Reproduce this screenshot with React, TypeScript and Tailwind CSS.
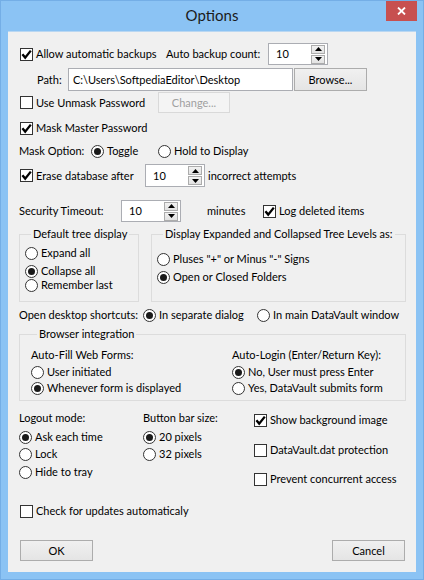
import React from "react";

function Check({ checked }: { checked?: boolean }) {
  return (
    <span className="flex h-[13px] w-[13px] shrink-0 items-center justify-center border border-[#333333] bg-white">
      {checked && (
        <svg width="11" height="11" viewBox="0 0 11 11">
          <path d="M1.4 5.2 L4.2 8.6 L9.8 1.6" fill="none" stroke="#000" strokeWidth="2.3" />
        </svg>
      )}
    </span>
  );
}

function Radio({ on }: { on?: boolean }) {
  return (
    <span className="flex h-[13px] w-[13px] shrink-0 items-center justify-center rounded-full border border-[#333333] bg-white">
      {on && <span className="h-[7px] w-[7px] rounded-full bg-[#1a1a1a]" />}
    </span>
  );
}

function SpinBtn({ up }: { up?: boolean }) {
  return (
    <span className="flex h-[9px] w-[14px] items-center justify-center border border-[#ACACAC] bg-gradient-to-b from-[#F2F2F2] to-[#E2E2E2]">
      <svg width="7" height="4" viewBox="0 0 7 4">
        {up ? <path d="M0 4 L3.5 0 L7 4 Z" fill="#000" /> : <path d="M0 0 L3.5 4 L7 0 Z" fill="#000" />}
      </svg>
    </span>
  );
}

function Spin({ value }: { value: string }) {
  return (
    <div className="flex h-full w-[60px] shrink-0 items-stretch border border-[#ABADB3] bg-white">
      <span className="flex flex-1 items-center pl-[7px]">{value}</span>
      <div className="flex flex-col justify-center gap-[1px] pr-[2px]">
        <SpinBtn up />
        <SpinBtn />
      </div>
    </div>
  );
}

function Btn({ children, className = "" }: { children: React.ReactNode; className?: string }) {
  return (
    <span
      className={`flex h-full w-[73px] shrink-0 items-center justify-center border border-[#ACACAC] bg-gradient-to-b from-[#F0F0F0] to-[#E5E5E5] ${className}`}
    >
      {children}
    </span>
  );
}

export default function App() {
  return (
    <div
      className="flex h-[580px] w-[424px] flex-col whitespace-nowrap border border-[#74AEE6] bg-[#8BC3F4] text-[11px] leading-[16px] text-black"
      style={{ fontFamily: 'Lato, "Noto Sans", sans-serif' }}
    >
      {/* title bar */}
      <div className="relative flex h-[30px] shrink-0 items-center justify-center pb-[2px]">
        <span className="text-[15px] text-[#1b1b1b]">Options</span>
        <span className="absolute right-[6px] top-0 flex h-[20px] w-[31px] items-center justify-center bg-[#C75050]">
          <svg width="9" height="8" viewBox="0 0 9 8">
            <path d="M1 0.5 L8 7.5 M8 0.5 L1 7.5" stroke="#fff" strokeWidth="1.8" />
          </svg>
        </span>
      </div>

      {/* client area */}
      <div className="mx-[7px] flex h-[541px] flex-col border-t border-[#B9D7F2] bg-[#F0F0F0]">
        {/* backups */}
        <div className="mt-[11px] flex h-[22px] items-center pl-[12px]">
          <Check checked />
          <span className="ml-[3px] w-[130px] shrink-0">Allow automatic backups</span>
          <span className="w-[102px] shrink-0">Auto backup count:</span>
          <Spin value="10" />
        </div>
        <div className="mt-[3px] flex h-[23px] items-center pl-[29px]">
          <span className="w-[31px] shrink-0">Path:</span>
          <span className="flex h-full w-[225px] shrink-0 items-center border border-[#ABADB3] bg-white pl-[4px]">
            C:\Users\SoftpediaEditor\Desktop
          </span>
          <Btn className="ml-[1px] border-[#3C9BEA]">Browse...</Btn>
        </div>
        <div className="mt-[1px] flex h-[21px] items-center pl-[12px]">
          <Check />
          <span className="ml-[3px] w-[122px] shrink-0">Use Unmask Password</span>
          <span className="flex h-full w-[72px] shrink-0 items-center justify-center border border-[#D9D9D9] bg-[#F4F4F4] text-[#A0A0A0]">
            Change...
          </span>
        </div>
        <div className="mt-[7px] flex h-[16px] items-center pl-[12px]">
          <Check checked />
          <span className="ml-[3px]">Mask Master Password</span>
        </div>
        <div className="mt-[7px] flex h-[16px] items-center pl-[11px]">
          <span className="w-[72px] shrink-0">Mask Option:</span>
          <Radio on />
          <span className="ml-[3px] w-[51px] shrink-0">Toggle</span>
          <Radio />
          <span className="ml-[3px]">Hold to Display</span>
        </div>
        <div className="mt-[5px] flex h-[23px] items-center pl-[12px]">
          <Check checked />
          <span className="ml-[3px] w-[109px] shrink-0">Erase database after</span>
          <Spin value="10" />
          <span className="ml-[3px]">incorrect attempts</span>
        </div>
        <div className="mt-[13px] flex h-[22px] items-center pl-[11px]">
          <span className="w-[102px] shrink-0">Security Timeout:</span>
          <Spin value="10" />
          <span className="ml-[26px] w-[56px] shrink-0">minutes</span>
          <Check checked />
          <span className="ml-[3px]">Log deleted items</span>
        </div>

        {/* tree groups */}
        <div className="mt-[4px] flex gap-[12px] pl-[11px]">
          <fieldset className="flex h-[76px] w-[120px] flex-col border border-[#DCDCDC] pl-[5px]">
            <legend className="ml-[6px] px-[2px] leading-[16px]">Default tree display</legend>
            <div className="mt-[4px] flex h-[14px] items-center">
              <Radio />
              <span className="ml-[3px]">Expand all</span>
            </div>
            <div className="mt-[4px] flex h-[14px] items-center">
              <Radio on />
              <span className="ml-[3px]">Collapse all</span>
            </div>
            <div className="flex h-[14px] items-center">
              <Radio />
              <span className="ml-[3px]">Remember last</span>
            </div>
          </fieldset>
          <fieldset className="flex h-[76px] w-[255px] flex-col border border-[#DCDCDC] pl-[5px]">
            <legend className="ml-[6px] px-[2px] leading-[16px]">Display Expanded and Collapsed Tree Levels as:</legend>
            <div className="mt-[10px] flex h-[14px] items-center">
              <Radio />
              <span className="ml-[3px]">Pluses "+" or Minus "-" Signs</span>
            </div>
            <div className="mt-[4px] flex h-[14px] items-center">
              <Radio on />
              <span className="ml-[3px]">Open or Closed Folders</span>
            </div>
          </fieldset>
        </div>

        <div className="mt-[5px] flex h-[16px] items-center pl-[11px]">
          <span className="w-[124px] shrink-0">Open desktop shortcuts:</span>
          <Radio on />
          <span className="ml-[3px] w-[98px] shrink-0">In separate dialog</span>
          <Radio />
          <span className="ml-[3px]">In main DataVault window</span>
        </div>

        {/* browser integration */}
        <div className="mt-[3px] pl-[11px]">
          <fieldset className="flex h-[75px] w-[387px] border border-[#DCDCDC] pl-[11px]">
            <legend className="ml-[6px] px-[2px] leading-[16px]">Browser integration</legend>
            <div className="flex w-[201px] shrink-0 flex-col">
              <div className="mt-[6px] flex h-[14px] items-center">Auto-Fill Web Forms:</div>
              <div className="mt-[3px] flex h-[14px] items-center">
                <Radio />
                <span className="ml-[3px]">User initiated</span>
              </div>
              <div className="mt-[2px] flex h-[14px] items-center">
                <Radio on />
                <span className="ml-[3px]">Whenever form is displayed</span>
              </div>
            </div>
            <div className="flex flex-col">
              <div className="mt-[6px] flex h-[14px] items-center">Auto-Login (Enter/Return Key):</div>
              <div className="mt-[3px] flex h-[14px] items-center">
                <Radio on />
                <span className="ml-[3px]">No, User must press Enter</span>
              </div>
              <div className="mt-[2px] flex h-[14px] items-center">
                <Radio />
                <span className="ml-[3px]">Yes, DataVault submits form</span>
              </div>
            </div>
          </fieldset>
        </div>

        {/* bottom options */}
        <div className="flex h-[90px] pl-[11px]">
          <div className="flex w-[124px] shrink-0 flex-col">
            <div className="mt-[10px] flex h-[14px] items-center">Logout mode:</div>
            <div className="mt-[5px] flex h-[14px] items-center">
              <Radio on />
              <span className="ml-[3px]">Ask each time</span>
            </div>
            <div className="mt-[3px] flex h-[14px] items-center">
              <Radio />
              <span className="ml-[3px]">Lock</span>
            </div>
            <div className="mt-[4px] flex h-[14px] items-center">
              <Radio />
              <span className="ml-[3px]">Hide to tray</span>
            </div>
          </div>
          <div className="flex w-[111px] shrink-0 flex-col">
            <div className="mt-[10px] flex h-[14px] items-center">Button bar size:</div>
            <div className="mt-[5px] flex h-[14px] items-center">
              <Radio on />
              <span className="ml-[3px]">20 pixels</span>
            </div>
            <div className="mt-[3px] flex h-[14px] items-center">
              <Radio />
              <span className="ml-[3px]">32 pixels</span>
            </div>
          </div>
          <div className="flex flex-col">
            <div className="mt-[12px] flex h-[14px] items-center">
              <Check checked />
              <span className="ml-[3px]">Show background image</span>
            </div>
            <div className="mt-[16px] flex h-[14px] items-center">
              <Check />
              <span className="ml-[3px]">DataVault.dat protection</span>
            </div>
            <div className="mt-[15px] flex h-[14px] items-center">
              <Check />
              <span className="ml-[3px]">Prevent concurrent access</span>
            </div>
          </div>
        </div>

        <div className="mt-[13px] flex h-[14px] items-center pl-[12px]">
          <Check />
          <span className="ml-[3px]">Check for updates automaticaly</span>
        </div>

        <div className="mt-[22px] flex h-[21px] justify-between pl-[12px] pr-[11px]">
          <Btn>OK</Btn>
          <Btn>Cancel</Btn>
        </div>
      </div>
    </div>
  );
}
